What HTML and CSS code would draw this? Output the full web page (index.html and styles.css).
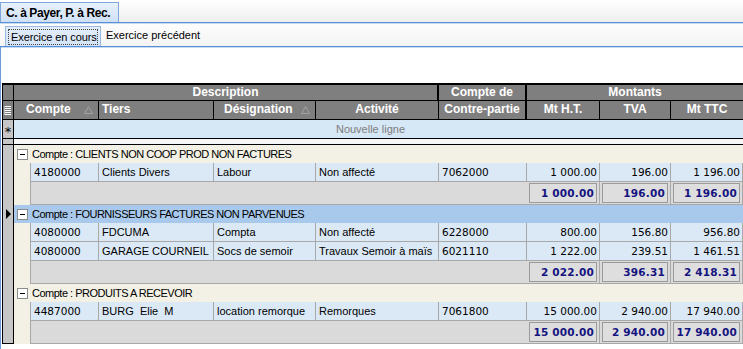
FILE: index.html
```html
<!DOCTYPE html>
<html lang="fr">
<head>
    <meta charset="UTF-8">
    <title>C. à Payer, P. à Rec.</title>
    <link rel="stylesheet" href="styles.css">
</head>
<body>
    <div class="tabsTop">
        <div class="tabMain">C. à Payer, P. à Rec.</div>
    </div>
    <div class="tabsSub">
        <div class="subtab active"><span>Exercice en cours</span></div>
        <div class="subtab">Exercice précédent</div>
    </div>

    <div class="panel">
        <div class="grid">
            <!-- header, first line -->
            <div class="row hdr hdr1">
                <div class="sel"></div>
                <div class="h span5 center">Description</div>
                <div class="h center">Compte de</div>
                <div class="h span3 center last">Montants</div>
            </div>
            <!-- header, second line -->
            <div class="row hdr hdr2">
                <div class="sel">
                    <svg width="8" height="11" viewBox="0 0 8 11">
                        <path d="M1 1.5h6M1 3.5h6M1 5.5h6M1 7.5h6M1 9.5h6" stroke="#fff" stroke-width="1"/>
                        <path d="M0.5 1v9" stroke="#bbb" stroke-width="1"/>
                    </svg>
                </div>
                <div class="h span2 hCompte">Compte <svg class="sort" width="9" height="8" viewBox="0 0 9 8"><path d="M4.5 0.5L8.5 7.5H0.5Z" fill="none" stroke="#a3a3a3"/></svg></div>
                <div class="h hTiers">Tiers</div>
                <div class="h hDesig">Désignation <svg class="sort" width="9" height="8" viewBox="0 0 9 8"><path d="M4.5 0.5L8.5 7.5H0.5Z" fill="none" stroke="#a3a3a3"/></svg></div>
                <div class="h center">Activité</div>
                <div class="h center">Contre-partie</div>
                <div class="h center">Mt H.T.</div>
                <div class="h center">TVA</div>
                <div class="h center last">Mt TTC</div>
            </div>
            <!-- new line -->
            <div class="row newRow">
                <div class="sel">*</div>
                <div class="span9 newCell">Nouvelle ligne</div>
            </div>
            <div class="row strip">
                <div class="sel"></div>
                <div class="span9"></div>
            </div>

            <!-- group 1 -->
            <div class="row groupRow">
                <div class="sel"></div>
                <div class="span9 groupCell"><i class="minus"></i>Compte : CLIENTS NON COOP PROD NON FACTURES</div>
            </div>
            <div class="row dataRow">
                <div class="sel"></div>
                <div class="indent"></div>
                <div class="c first code">4180000</div>
                <div class="c">Clients Divers</div>
                <div class="c">Labour</div>
                <div class="c">Non affecté</div>
                <div class="c code">7062000</div>
                <div class="c num">1 000.00</div>
                <div class="c num">196.00</div>
                <div class="c num">1 196.00</div>
            </div>
            <div class="row sumRow">
                <div class="sel"></div>
                <div class="indent"></div>
                <div class="s span5 first"></div>
                <div class="s"><b>1 000.00</b></div>
                <div class="s"><b>196.00</b></div>
                <div class="s"><b>1 196.00</b></div>
            </div>

            <!-- group 2 (selected) -->
            <div class="row groupRow current">
                <div class="sel"><i class="pointer"></i></div>
                <div class="span9 groupCell"><i class="minus"></i>Compte : FOURNISSEURS FACTURES NON PARVENUES</div>
            </div>
            <div class="row dataRow">
                <div class="sel"></div>
                <div class="indent"></div>
                <div class="c first code">4080000</div>
                <div class="c">FDCUMA</div>
                <div class="c">Compta</div>
                <div class="c">Non affecté</div>
                <div class="c code">6228000</div>
                <div class="c num">800.00</div>
                <div class="c num">156.80</div>
                <div class="c num">956.80</div>
            </div>
            <div class="row dataRow">
                <div class="sel"></div>
                <div class="indent"></div>
                <div class="c first code">4080000</div>
                <div class="c">GARAGE COURNEIL</div>
                <div class="c">Socs de semoir</div>
                <div class="c">Travaux Semoir à maïs</div>
                <div class="c code">6021110</div>
                <div class="c num">1 222.00</div>
                <div class="c num">239.51</div>
                <div class="c num">1 461.51</div>
            </div>
            <div class="row sumRow">
                <div class="sel"></div>
                <div class="indent"></div>
                <div class="s span5 first"></div>
                <div class="s"><b>2 022.00</b></div>
                <div class="s"><b>396.31</b></div>
                <div class="s"><b>2 418.31</b></div>
            </div>

            <!-- group 3 -->
            <div class="row groupRow">
                <div class="sel"></div>
                <div class="span9 groupCell"><i class="minus"></i>Compte : PRODUITS A RECEVOIR</div>
            </div>
            <div class="row dataRow">
                <div class="sel"></div>
                <div class="indent"></div>
                <div class="c first code">4487000</div>
                <div class="c">BURG&nbsp; Elie&nbsp; M</div>
                <div class="c">location remorque</div>
                <div class="c">Remorques</div>
                <div class="c code">7061800</div>
                <div class="c num">15 000.00</div>
                <div class="c num">2 940.00</div>
                <div class="c num">17 940.00</div>
            </div>
            <div class="row sumRow lastRow">
                <div class="sel"></div>
                <div class="indent"></div>
                <div class="s span5 first"></div>
                <div class="s"><b>15 000.00</b></div>
                <div class="s"><b>2 940.00</b></div>
                <div class="s"><b>17 940.00</b></div>
            </div>
        </div>
    </div>
</body>
</html>
```

FILE: styles.css
```css
* {
    margin: 0;
    padding: 0;
    box-sizing: border-box;
}

body {
    font-family: "Liberation Sans", Arial, sans-serif;
    font-size: 11px;
    color: #000;
    background: #fff;
    width: 743px;
    height: 349px;
    overflow: hidden;
}

/* top tabs */
.tabsTop {
    height: 23px;
    padding-top: 2px;
    background: linear-gradient(#ffffff, #eeeeee);
    border-bottom: 1px solid #5b8fd4;
    box-shadow: 0 1px 0 #c6dcf5;
}

.tabMain {
    width: 119px;
    height: 20px;
    padding: 3px 0 0 5px;
    font-weight: bold;
    font-size: 12px;
    letter-spacing: -0.4px;
    background: linear-gradient(#e8f1fb, #cfe1f6);
    border: 1px solid #7ea6d8;
    border-bottom: none;
}

.tabsSub {
    height: 23px;
    margin-top: 1px;
    display: flex;
    align-items: flex-end;
    background: linear-gradient(#fdfdfd, #f4f4f4);
    border-bottom: 1px solid #5b8fd4;
    box-shadow: 0 1px 0 #c6dcf5;
}

.subtab {
    height: 20px;
    padding: 3px 5px 0 5px;
    font-size: 11px;
    white-space: nowrap;
}

.subtab.active {
    margin-left: 5px;
    padding: 2px;
    width: 96px;
    background: linear-gradient(#e4eefa, #d3e3f7);
    border: 1px solid #9ab8e0;
    border-bottom: none;
}

.subtab.active span {
    display: block;
    height: 16px;
    padding: 1px 0 0 2px;
    border: 1px dotted #444;
    letter-spacing: -0.1px;
}

/* grid panel */
.panel {
    height: 302px;
    padding: 36px 0 0 2px;
    border-left: 1px solid #6b9bd6;
}

.grid {
    width: 741px;
    margin-left: -1px;
}

.row {
    display: grid;
    grid-template-columns: 12px 16px 69px 115px 102px 123px 88px 73px 71px 72px;
}

.span2 { grid-column: span 2; }
.span3 { grid-column: span 3; }
.span5 { grid-column: span 5; }
.span9 { grid-column: span 9; }

.sel {
    background: #c6c6c6;
    border-left: 1px solid #000;
    border-right: 1px solid #000;
    display: flex;
    align-items: center;
    justify-content: center;
}

/* header */
.hdr .sel {
    background: #7f7f7f;
    border-bottom: 1px solid #000;
}

.hdr1 .sel,
.hdr1 .h {
    border-top: 2px solid #000;
}

.h {
    height: 19px;
    background: #7f7f7f;
    color: #fff;
    font-weight: bold;
    font-size: 12px;
    line-height: 17px;
    border-right: 1px solid #000;
    border-bottom: 1px solid #000;
    white-space: nowrap;
    overflow: hidden;
    position: relative;
}

.hdr1 .h {
    height: 18px;
    line-height: 15px;
    border-right-width: 2px;
}

.hdr2 .h:nth-child(6) {
    border-right-width: 2px;
}

.h.last {
    border-right: none;
}

.center {
    text-align: center;
}

.hCompte { padding-left: 12px; }
.hTiers { padding-left: 3px; }
.hDesig { padding-left: 10px; }

.sort {
    position: absolute;
    top: 5px;
}

.hCompte .sort { left: 70px; }
.hDesig .sort { left: 87px; }

/* new line */
.newRow .sel {
    height: 19px;
    overflow: hidden;
    background: #c6c6c6;
    font-family: "DejaVu Sans", sans-serif;
    font-size: 13px;
    line-height: 19px;
    align-items: flex-start;
    padding-top: 2px;
    border-bottom: 1px solid #000;
}

.newCell {
    height: 19px;
    background: #d6e7f5;
    color: #7d7d7d;
    text-align: center;
    line-height: 18px;
    padding-right: 16px;
    border-bottom: 1px solid #000;
}

.strip .sel,
.strip .span9 {
    height: 6px;
    background: #f7f7f7;
    border-bottom: 1px solid #000;
}

.strip .sel {
    background: #c6c6c6;
}

/* groups */
.groupCell {
    height: 18px;
    background: #f3f1e5;
    display: flex;
    align-items: center;
    padding-left: 3px;
    padding-top: 1px;
    line-height: 17px;
    font-size: 11px;
    letter-spacing: -0.5px;
    white-space: nowrap;
}

.current .groupCell {
    background: #a9c9ec;
}

.minus {
    flex: none;
    width: 11px;
    height: 11px;
    margin-right: 4px;
    border: 1px solid #8c8c8c;
    background: #fff;
    position: relative;
}

.minus::after {
    content: "";
    position: absolute;
    left: 2px;
    top: 4px;
    width: 5px;
    height: 1px;
    background: #000;
}

.pointer {
    width: 0;
    height: 0;
    border-top: 5px solid transparent;
    border-bottom: 5px solid transparent;
    border-left: 5px solid #000;
}

/* data */
.indent {
    background: #f3f1e5;
}

.c {
    height: 19px;
    background: #dbe9f6;
    border-right: 1px solid #a8a8a8;
    border-bottom: 1px solid #a8a8a8;
    padding: 0 3px;
    line-height: 18px;
    white-space: nowrap;
    overflow: hidden;
}

.c.first,
.s.first {
    border-left: 1px solid #a8a8a8;
}

.code,
.num {
    font-family: "DejaVu Sans", Verdana, sans-serif;
    font-size: 10.5px;
}

.num {
    text-align: right;
    padding-right: 2px;
}

.s {
    height: 23px;
    background: #dadada;
    border-right: 1px solid #a8a8a8;
    border-bottom: 1px solid #a8a8a8;
    padding: 1px 2px;
}

.s.first {
    border-right: none;
}

.s b {
    display: block;
    height: 20px;
    border: 1px solid #9a9a9a;
    background: #dedede;
    color: #141480;
    font-family: "DejaVu Sans", Verdana, sans-serif;
    font-size: 10.5px;
    letter-spacing: 0.2px;
    text-align: right;
    line-height: 18px;
    padding-right: 2px;
    white-space: nowrap;
    overflow: hidden;
}

.lastRow .sel {
    border-bottom: 1px solid #000;
}
```
